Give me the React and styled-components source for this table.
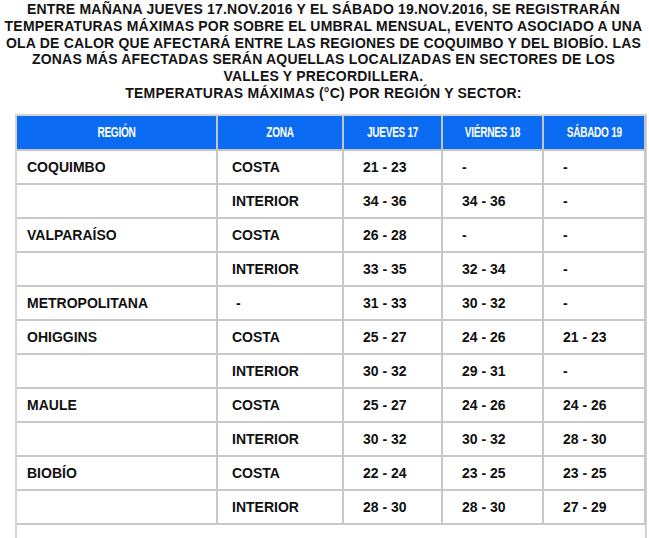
import styled, { createGlobalStyle } from 'styled-components';

const intro = [
  'ENTRE MAÑANA JUEVES 17.NOV.2016 Y EL SÁBADO 19.NOV.2016, SE REGISTRARÁN',
  'TEMPERATURAS MÁXIMAS POR SOBRE EL UMBRAL MENSUAL, EVENTO ASOCIADO A UNA',
  'OLA DE CALOR QUE AFECTARÁ ENTRE LAS REGIONES DE COQUIMBO Y DEL BIOBÍO. LAS',
  'ZONAS MÁS AFECTADAS SERÁN AQUELLAS LOCALIZADAS EN SECTORES DE LOS',
  'VALLES Y PRECORDILLERA.',
  'TEMPERATURAS MÁXIMAS (°C) POR REGIÓN Y SECTOR:',
];

const rows = [
  { region: 'COQUIMBO', zona: 'COSTA', d: ['21 - 23', '-', '-'] },
  { region: '', zona: 'INTERIOR', d: ['34 - 36', '34 - 36', '-'] },
  { region: 'VALPARAÍSO', zona: 'COSTA', d: ['26 - 28', '-', '-'] },
  { region: '', zona: 'INTERIOR', d: ['33 - 35', '32 - 34', '-'] },
  { region: 'METROPOLITANA', zona: ' -', d: ['31 - 33', '30 - 32', '-'] },
  { region: 'OHIGGINS', zona: 'COSTA', d: ['25 - 27', '24 - 26', '21 - 23'] },
  { region: '', zona: 'INTERIOR', d: ['30 - 32', '29 - 31', '-'] },
  { region: 'MAULE', zona: 'COSTA', d: ['25 - 27', '24 - 26', '24 - 26'] },
  { region: '', zona: 'INTERIOR', d: ['30 - 32', '30 - 32', '28 - 30'] },
  { region: 'BIOBÍO', zona: 'COSTA', d: ['22 - 24', '23 - 25', '23 - 25'] },
  { region: '', zona: 'INTERIOR', d: ['28 - 30', '28 - 30', '27 - 29'] },
];

const heads = ['REGIÓN', 'ZONA', 'JUEVES 17', 'VIÉRNES 18', 'SÁBADO 19'];
const widths = [200, 126, 99, 101, 102];

const App = () => {
  return (
    <>
      <GlobalStyle />
      <Page>
        <Intro>
          {intro.map((line) => (
            <IntroLine key={line}>{line}</IntroLine>
          ))}
        </Intro>
        <TableFrame>
          <Table>
            <colgroup>
              {widths.map((w, i) => (
                <col key={i} style={{ width: w }} />
              ))}
            </colgroup>
            <thead>
              <tr>
                {heads.map((h) => (
                  <Head key={h}>
                    <HeadText>{h}</HeadText>
                  </Head>
                ))}
              </tr>
            </thead>
            <tbody>
              {rows.map((r, i) => (
                <tr key={i}>
                  <Cell $pad={10}>{r.region}</Cell>
                  <Cell $pad={14}>{r.zona}</Cell>
                  {r.d.map((v, j) => (
                    <Cell key={j} $pad={19}>{v}</Cell>
                  ))}
                </tr>
              ))}
            </tbody>
          </Table>
        </TableFrame>
      </Page>
    </>
  );
};

const GlobalStyle = createGlobalStyle`
  body {
    margin: 0;
    background: #fff;
    font-family: "Liberation Sans", Arial, sans-serif;
  }
`;

const Page = styled.div`
  width: 649px;
  height: 538px;
  overflow: hidden;
`;

const Intro = styled.div`
  padding-top: 1px;
  margin-right: 2px;
  font-family: "Liberation Sans", Arial, sans-serif;
  font-weight: bold;
  font-size: 14px;
  letter-spacing: 0.2px;
  line-height: 16.8px;
  color: #141414;
`;

const IntroLine = styled.div`
  text-align: center;
  white-space: nowrap;
`;

const TableFrame = styled.div`
  margin: 12px 0 0 15px;
  width: 632px;
  height: 440px;
  border-left: 2px solid #d4d4d4;
  border-right: 2px solid #d4d4d4;
  border-top: 2px solid #d4d4d4;
  box-sizing: border-box;
`;

const Table = styled.table`
  border-collapse: collapse;
  table-layout: fixed;
  width: 628px;
`;

const Head = styled.th`
  height: 33px;
  padding: 0;
  background: #0b6bf3;
  color: #fff;
  font-weight: bold;
  font-size: 14px;
  text-align: center;
  white-space: nowrap;
  border: 2px solid #c4c4c4;
  border-top: 0;
  &:first-child { border-left: 0; }
`;

const HeadText = styled.span`
  display: inline-block;
  transform: scaleX(0.72);
  letter-spacing: -0.4px;
`;

const Cell = styled.td`
  height: 32px;
  padding: 0 0 0 ${(p) => p.$pad}px;
  font-size: 14px;
  font-weight: bold;
  color: #111;
  white-space: pre;
  border: 2px solid #c8c8c8;
  &:first-child { border-left: 0; }
`;

export default App;
